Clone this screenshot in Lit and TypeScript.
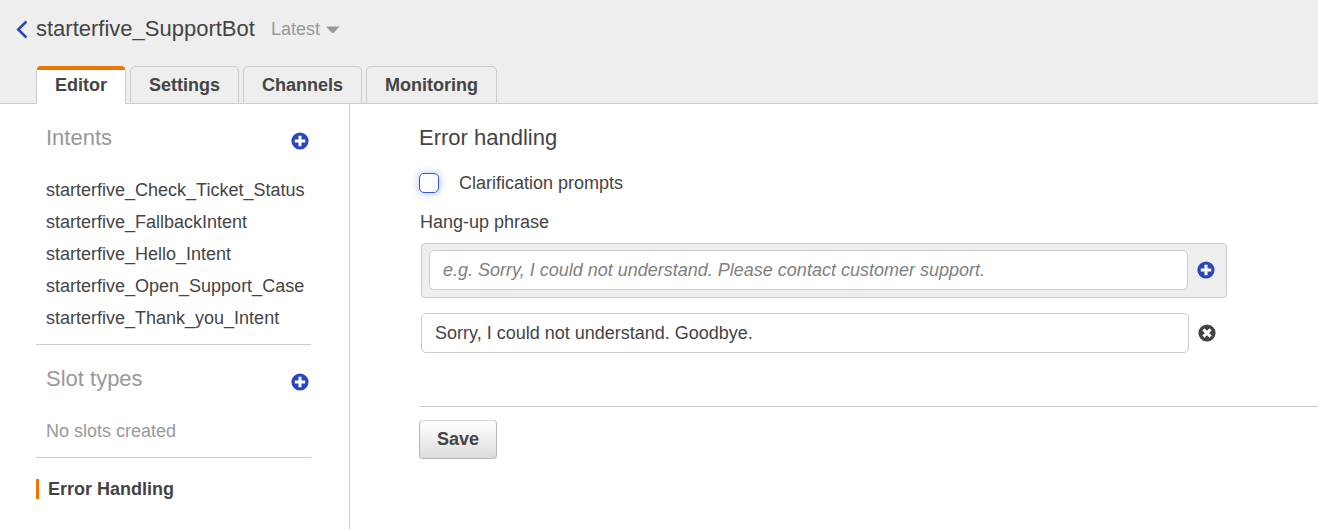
import { LitElement, html, css, svg } from "lit";
import { customElement, property, state } from "lit/decorators.js";
import { classMap } from "lit/directives/class-map.js";

@customElement("round-icon")
class RoundIcon extends LitElement {
  @property() kind = "plus";

  static styles = css`
    :host { display: block; width: 18px; height: 18px; }
    svg { display: block; }
    .plus { fill: #2b44c0; }
    .remove { fill: #444444; }
    .mark { fill: none; stroke: #ffffff; }
  `;

  render() {
    const mark =
      this.kind === "plus"
        ? svg`<path class="mark" d="M9 3.8v10.4M3.8 9h10.4" stroke-width="3"/>`
        : svg`<path class="mark" d="M5.4 5.4l7.2 7.2M12.6 5.4l-7.2 7.2" stroke-width="3"/>`;
    return html`<svg width="18" height="18" viewBox="0 0 18 18" aria-hidden="true">
      <circle class=${this.kind} cx="9" cy="9" r="8.6"></circle>${mark}
    </svg>`;
  }
}

@customElement("app-root")
class AppRoot extends LitElement {
  @state() private tab = "Editor";
  @state() private clarification = false;

  private tabs = ["Editor", "Settings", "Channels", "Monitoring"];
  private intents = [
    "starterfive_Check_Ticket_Status",
    "starterfive_FallbackIntent",
    "starterfive_Hello_Intent",
    "starterfive_Open_Support_Case",
    "starterfive_Thank_you_Intent",
  ];

  static styles = css`
    :host {
      display: flex;
      flex-direction: column;
      min-height: 100vh;
      background: #ffffff;
      color: #444444;
      font-family: "Liberation Sans", Arial, sans-serif;
      font-size: 18px;
      line-height: 20px;
    }
    * { box-sizing: border-box; }
    h1, h2, p, ul { margin: 0; padding: 0; font-weight: normal; }
    h1, h2 { font-size: 22px; line-height: 28px; }
    ul { list-style: none; }
    a { color: inherit; text-decoration: none; }
    button, input { font: inherit; color: inherit; margin: 0; }
    .header {
      background: #eeeeee;
      border-bottom: 1px solid #cccccc;
      padding: 15px 16px 0;
    }
    .title { display: flex; align-items: center; height: 28px; }
    .back { width: 20px; height: 20px; }
    .back svg { display: block; }
    .version {
      display: flex;
      align-items: center;
      gap: 6px;
      margin-left: 16px;
      padding: 0;
      border: 0;
      background: none;
      color: #999999;
    }
    .tabs { display: flex; gap: 4px; margin: 23px 20px -1px; }
    .tab {
      height: 38px;
      padding: 0 18px;
      border: 1px solid #cccccc;
      border-radius: 5px 5px 0 0;
      background: #eeeeee;
      font-weight: bold;
    }
    .tab.active {
      position: relative;
      background: #ffffff;
      border-bottom-color: #ffffff;
    }
    .tab.active::before {
      content: "";
      position: absolute;
      inset: -1px 0 auto;
      height: 4px;
      border-radius: 4px 4px 0 0;
      background: #ec7600;
    }
    .body { display: flex; flex: 1; }
    .sidebar {
      flex: none;
      width: 350px;
      padding: 20px 38px 20px 36px;
      border-right: 1px solid #cccccc;
    }
    .section { border-bottom: 1px solid #cccccc; }
    .section-head {
      display: flex;
      align-items: center;
      justify-content: space-between;
      padding: 0 2px 0 10px;
      color: #999999;
    }
    .section + .section { margin-top: 20px; }
    .icon-button {
      flex: none;
      padding: 0;
      border: 0;
      background: none;
      cursor: pointer;
    }
    .section-head .icon-button { margin-top: 6px; }
    .intents { padding: 22px 0 10px 10px; }
    .intents li { line-height: 32px; }
    .empty { padding: 28px 10px 16px; color: #999999; }
    .current {
      display: block;
      margin-top: 21px;
      border-left: 3px solid #ec7600;
      padding-left: 9px;
      font-weight: bold;
    }
    .main { flex: 1; min-width: 0; padding: 20px 0 20px 69px; }
    .check { display: flex; align-items: center; gap: 20px; margin-top: 21px; }
    .box {
      appearance: none;
      width: 20px;
      height: 20px;
      border: 1px solid #2f5bd8;
      border-radius: 5px;
      background: #ffffff;
      box-shadow: 0 0 8px #a9bdfa;
    }
    .box:checked { background: #2b44c0; }
    .phrases { margin: 19px 91px 0 2px; }
    .phrase-label { display: block; margin: 0 0 11px -1px; }
    .row { display: flex; align-items: center; gap: 9px; }
    .row.add {
      padding: 6px 11px 7px 7px;
      border: 1px solid #cccccc;
      border-radius: 4px;
      background: #eeeeee;
      margin-bottom: 15px;
    }
    .row.saved { padding-right: 11px; }
    .text {
      flex: 1;
      min-width: 0;
      height: 40px;
      padding: 0 13px;
      border: 1px solid #cccccc;
      border-radius: 5px;
      background: #ffffff;
    }
    .text::placeholder { color: #808080; font-style: italic; opacity: 1; }
    .actions {
      margin-top: 53px;
      padding-top: 13px;
      border-top: 1px solid #cccccc;
    }
    .save {
      height: 39px;
      padding: 0 17px 2px;
      border: 1px solid #b7b7b7;
      border-top-color: #d5d5d5;
      border-radius: 4px;
      background: linear-gradient(#ffffff, #dddddd);
      font-weight: bold;
    }
  `;

  private addButton(label: string) {
    return html`<button class="icon-button" aria-label=${label}>
      <round-icon kind="plus"></round-icon>
    </button>`;
  }

  render() {
    return html`
      <header class="header">
        <div class="title">
          <a class="back" href="#" aria-label="Back">
            <svg width="20" height="20" viewBox="0 0 20 20">
              <path d="M10.4 2.5L2.2 10.5l8.2 8" fill="none" stroke="#2b44c0" stroke-width="2.5" />
            </svg>
          </a>
          <h1>starterfive_SupportBot</h1>
          <button class="version">
            Latest
            <svg width="14" height="7" viewBox="0 0 14 7" aria-hidden="true">
              <path d="M0 0.5h13.5L8 6.5q-1.2 1-2.4 0z" fill="#999999" />
            </svg>
          </button>
        </div>
        <nav class="tabs" role="tablist">
          ${this.tabs.map(
            (name) => html`<button
              role="tab"
              aria-selected=${name === this.tab}
              class=${classMap({ tab: true, active: name === this.tab })}
              @click=${() => (this.tab = name)}
            >${name}</button>`
          )}
        </nav>
      </header>
      <div class="body">
        <aside class="sidebar">
          <section class="section">
            <div class="section-head"><h2>Intents</h2>${this.addButton("Add intent")}</div>
            <ul class="intents">
              ${this.intents.map((name) => html`<li><a href="#">${name}</a></li>`)}
            </ul>
          </section>
          <section class="section">
            <div class="section-head"><h2>Slot types</h2>${this.addButton("Add slot type")}</div>
            <p class="empty">No slots created</p>
          </section>
          <a class="current" href="#">Error Handling</a>
        </aside>
        <main class="main">
          <h2>Error handling</h2>
          <div class="check">
            <input
              class="box"
              id="clarification"
              type="checkbox"
              .checked=${this.clarification}
              @change=${() => (this.clarification = !this.clarification)}
            />
            <label for="clarification">Clarification prompts</label>
          </div>
          <div class="phrases">
            <label class="phrase-label" for="phrase">Hang-up phrase</label>
            <div class="row add">
              <input
                class="text"
                id="phrase"
                type="text"
                placeholder="e.g. Sorry, I could not understand. Please contact customer support."
              />
              ${this.addButton("Add phrase")}
            </div>
            <div class="row saved">
              <input
                class="text"
                type="text"
                aria-label="Saved hang-up phrase"
                value="Sorry, I could not understand. Goodbye."
              />
              <button class="icon-button" aria-label="Remove phrase">
                <round-icon kind="remove"></round-icon>
              </button>
            </div>
          </div>
          <div class="actions"><button class="save">Save</button></div>
        </main>
      </div>
    `;
  }
}
